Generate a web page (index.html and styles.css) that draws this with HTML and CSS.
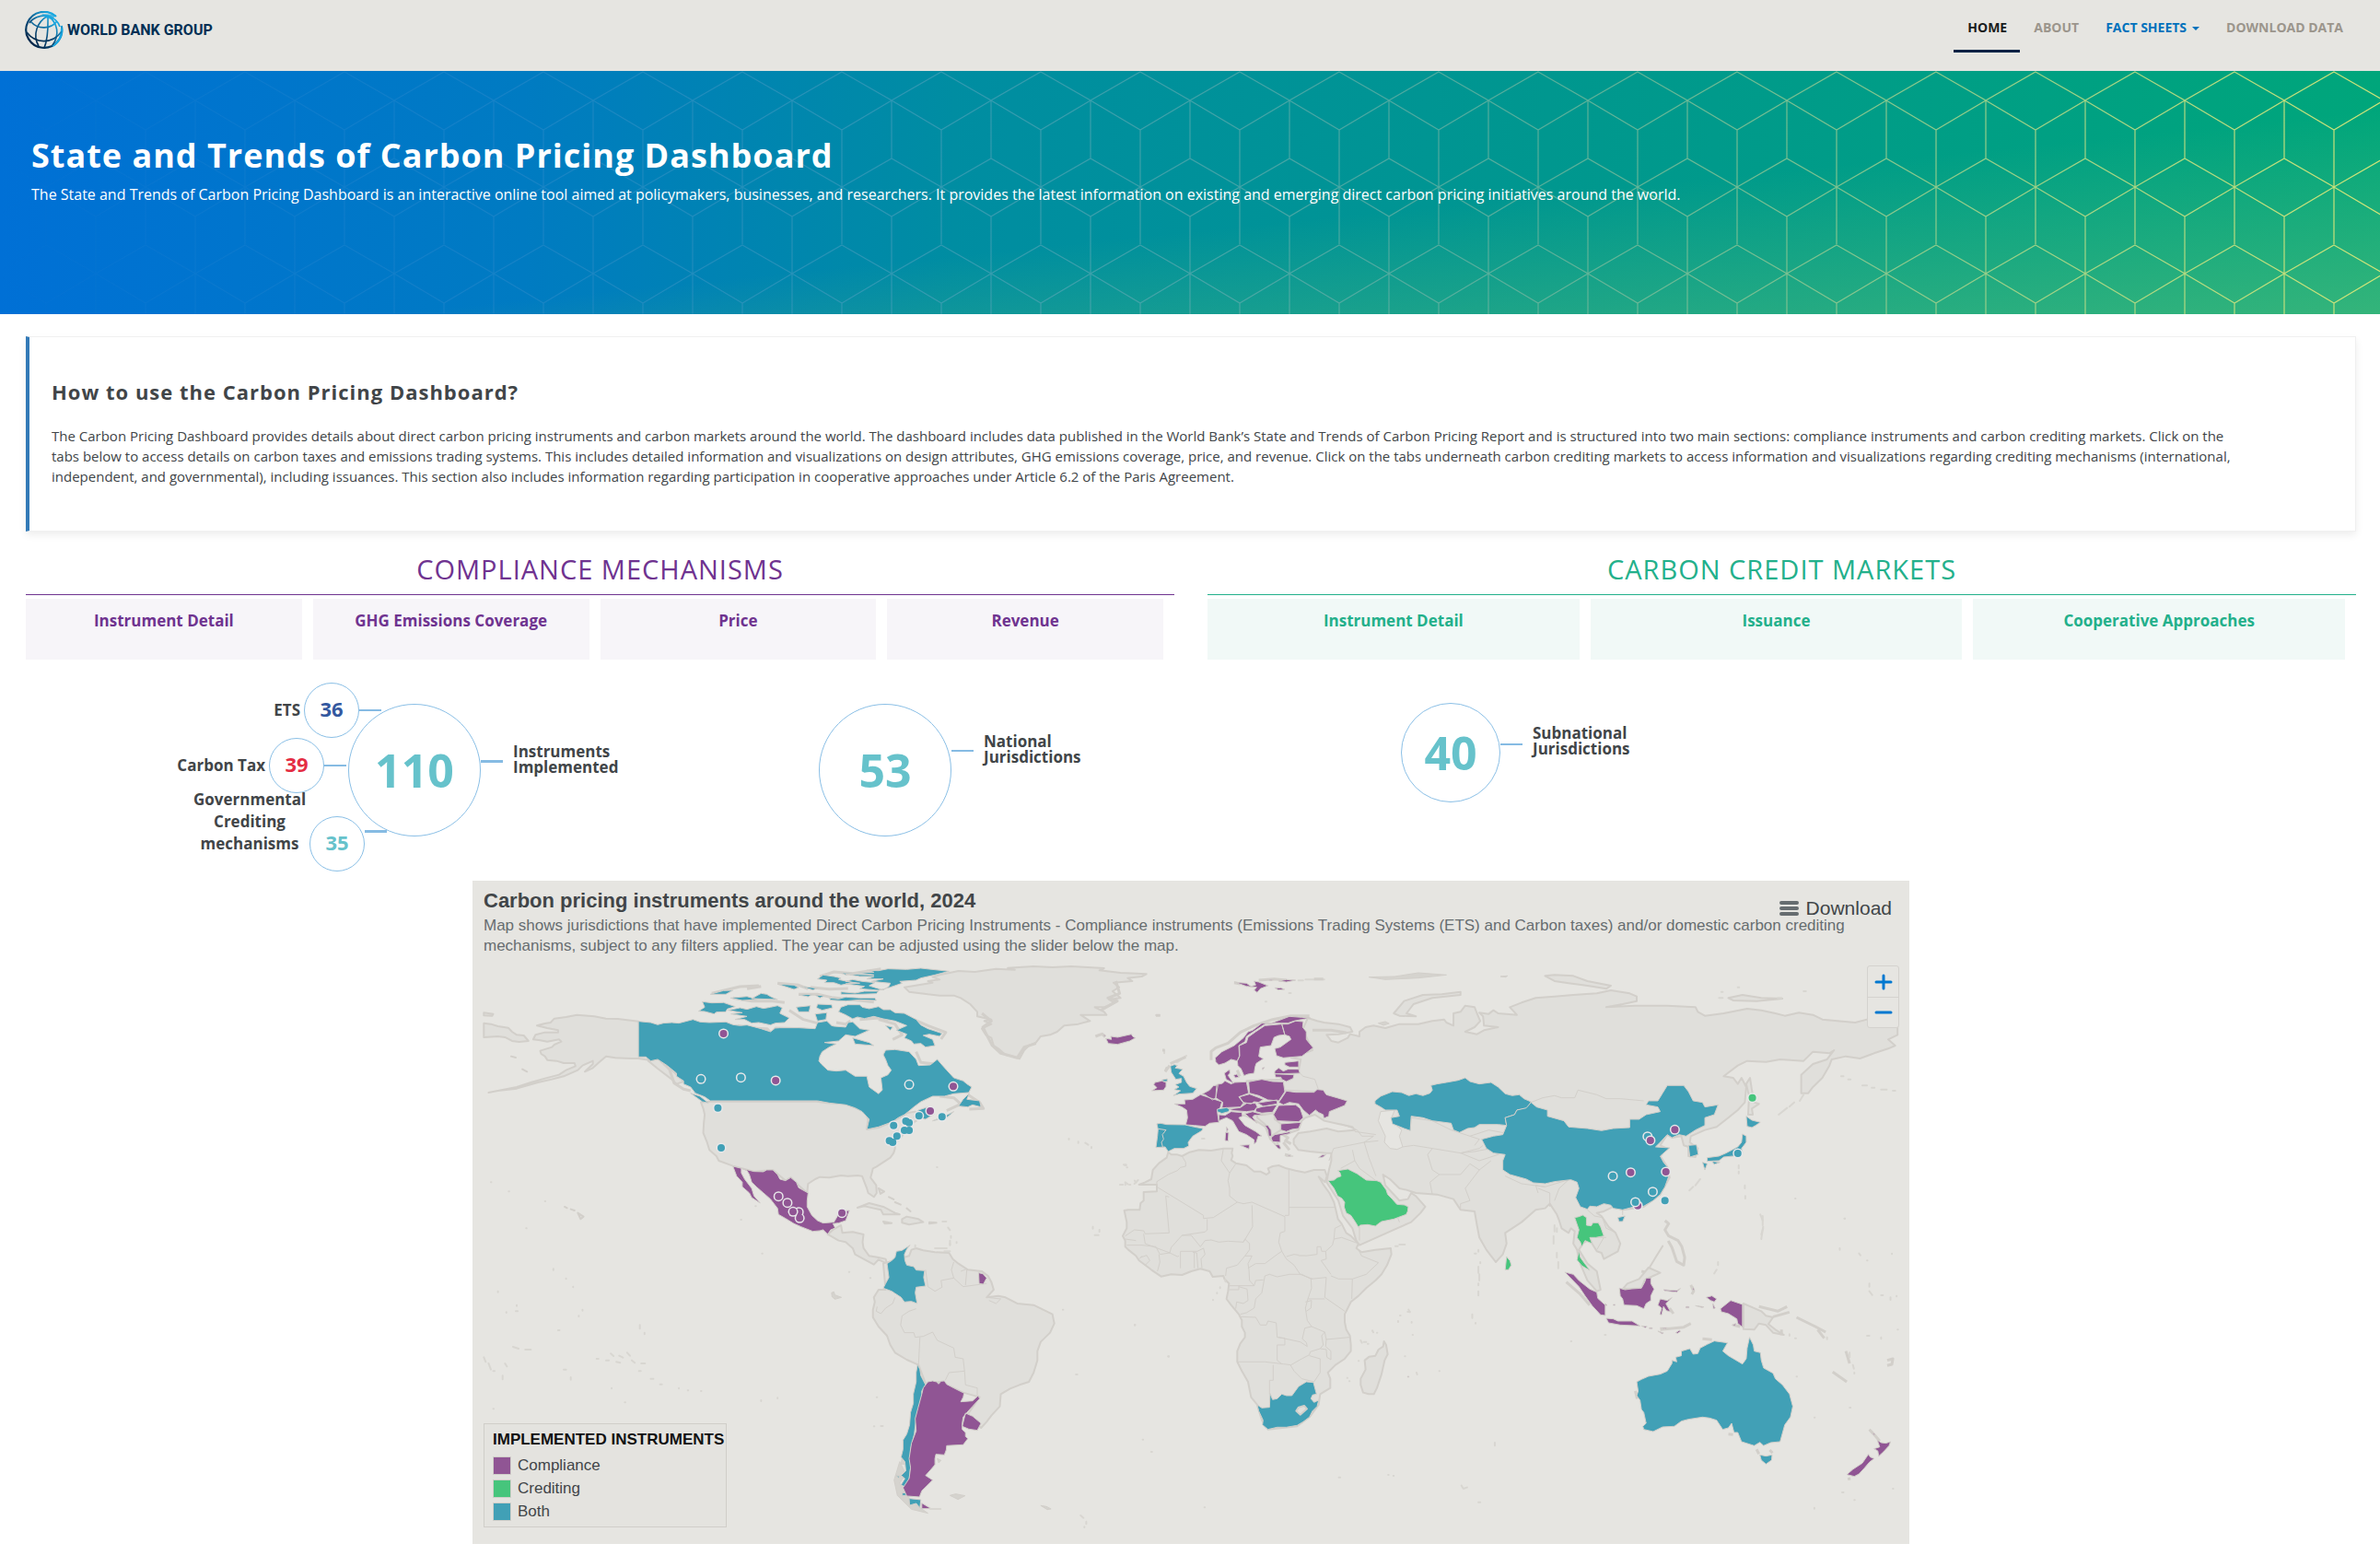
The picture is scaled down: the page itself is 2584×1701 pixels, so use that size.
FILE: index.html
```html
<!DOCTYPE html>
<html lang="en">
<head>
<meta charset="utf-8">
<title>State and Trends of Carbon Pricing Dashboard</title>
<link rel="stylesheet" href="styles.css">
</head>
<body>
<header class="site-header">
  <a class="brand" href="#">
    <svg class="brand-globe" viewBox="0 0 42 42" aria-hidden="true">
      <defs><linearGradient id="globe" x1=".1" y1=".9" x2=".75" y2=".1"><stop offset="0" stop-color="#002244"/><stop offset=".45" stop-color="#0a4a78"/><stop offset="1" stop-color="#1aa7e0"/></linearGradient></defs>
      <g fill="none" stroke="url(#globe)" stroke-width="1.6">
        <path d="M34 6A19.500 19.500 0 1 0 39.800 16" stroke-width="2.2"/>
        <path d="M40 19A19.500 19.500 0 0 1 30 38" stroke="#1aa7e0" stroke-width="2.2"/>
        <path d="M25 5C13 12 8 26 15 38M25 5C25 14 26 28 21 40M25 5C36 13 38 26 30 37M25 5C16 4 8 8 5 13M25 5C31 7 36 11 38 17"/>
        <path d="M7 12C14 20 28 20 35 11M2 23C12 36 30 36 40 22"/>
      </g>
      <path d="M18 3L34 4 30 9 24 8Z" fill="#1aa7e0" opacity=".7"/>
    </svg>
    <span>WORLD BANK GROUP</span>
  </a>
  <nav class="main-nav" aria-label="Main">
    <a class="is-active" href="#">HOME</a>
    <a href="#">ABOUT</a>
    <a class="is-menu" href="#">FACT SHEETS<i class="caret"></i></a>
    <a href="#">DOWNLOAD DATA</a>
  </nav>
</header>

<section class="banner">
  <svg class="banner-pattern" width="100%" height="264" aria-hidden="true">
    <defs>
      <pattern id="cubes" x="-4" y="0" width="108" height="264" patternUnits="userSpaceOnUse">
        <path d="M54 1L108 32 54 64 0 32ZM54 64V188M0 32V95M108 32V95M-54 126L0 95 54 126 0 158ZM54 126L108 95 162 126 108 158ZM54 189L108 220 54 252 0 220ZM54 252V264M0 158V264M108 158V264" fill="none" stroke="#fff" stroke-width="1.2"/>
      </pattern>
      <mask id="cube-mask"><rect width="100%" height="264" fill="url(#cubes)"/></mask>
      <linearGradient id="cube-ink">
        <stop offset="0" stop-color="#3a8fd8" stop-opacity="0"/>
        <stop offset=".2" stop-color="#3a8fd0" stop-opacity=".35"/>
        <stop offset=".4" stop-color="#5aa5bd" stop-opacity=".55"/>
        <stop offset=".65" stop-color="#74b79f" stop-opacity=".75"/>
        <stop offset=".85" stop-color="#a3d387" stop-opacity=".95"/>
        <stop offset="1" stop-color="#cfe478"/>
      </linearGradient>
    </defs>
    <rect width="100%" height="264" fill="url(#cube-ink)" mask="url(#cube-mask)"/>
  </svg>
  <div class="banner-text">
    <h1>State and Trends of Carbon Pricing Dashboard</h1>
    <p>The State and Trends of Carbon Pricing Dashboard is an interactive online tool aimed at policymakers, businesses, and researchers. It provides the latest information on existing and emerging direct carbon pricing initiatives around the world.</p>
  </div>
</section>

<main>
<section class="intro">
  <h2>How to use the Carbon Pricing Dashboard?</h2>
  <p>The Carbon Pricing Dashboard provides details about direct carbon pricing instruments and carbon markets around the world. The dashboard includes data published in the World Bank’s State and Trends of Carbon Pricing Report and is structured into two main sections: compliance instruments and carbon crediting markets. Click on the<br>tabs below to access details on carbon taxes and emissions trading systems. This includes detailed information and visualizations on design attributes, GHG emissions coverage, price, and revenue. Click on the tabs underneath carbon crediting markets to access information and visualizations regarding crediting mechanisms (international,<br>independent, and governmental), including issuances. This section also includes information regarding participation in cooperative approaches under Article 6.2 of the Paris Agreement.</p>
</section>

<div class="sections">
  <section class="tabs tabs-compliance">
    <h2>COMPLIANCE MECHANISMS</h2>
    <nav aria-label="Compliance mechanisms">
      <a href="#">Instrument Detail</a><a href="#">GHG Emissions Coverage</a><a href="#">Price</a><a href="#">Revenue</a>
    </nav>
  </section>
  <section class="tabs tabs-credit">
    <h2>CARBON CREDIT MARKETS</h2>
    <nav aria-label="Carbon credit markets">
      <a href="#">Instrument Detail</a><a href="#">Issuance</a><a href="#">Cooperative Approaches</a>
    </nav>
  </section>
</div>

<section class="stats">
  <div class="stat stat-total">
    <ul class="breakdown">
      <li class="part-ets"><span>ETS</span><b class="circle">36</b><i class="link"></i></li>
      <li class="part-tax"><span>Carbon Tax</span><b class="circle">39</b><i class="link"></i></li>
      <li class="part-gov"><span>Governmental Crediting mechanisms</span><b class="circle">35</b><i class="link"></i></li>
    </ul>
    <b class="circle circle-large">110</b><i class="link"></i>
    <span class="stat-label">Instruments<br>Implemented</span>
  </div>
  <div class="stat stat-national">
    <b class="circle circle-large">53</b><i class="link"></i>
    <span class="stat-label">National<br>Jurisdictions</span>
  </div>
  <div class="stat stat-subnational">
    <b class="circle circle-medium">40</b><i class="link"></i>
    <span class="stat-label">Subnational<br>Jurisdictions</span>
  </div>
</section>

<section class="map-panel">
  <header>
    <h2>Carbon pricing instruments around the world, 2024</h2>
    <p>Map shows jurisdictions that have implemented Direct Carbon Pricing Instruments - Compliance instruments (Emissions Trading Systems (ETS) and Carbon taxes) and/or domestic carbon crediting mechanisms, subject to any filters applied. The year can be adjusted using the slider below the map.</p>
  </header>
  <button class="download" type="button">
    <svg width="21" height="16" viewBox="0 0 21 16" aria-hidden="true"><path d="M2 2H19M2 8H19M2 14H19" stroke="#666d70" stroke-width="4" stroke-linecap="round"/></svg>Download
  </button>

  <svg class="world" viewBox="513 1042 1560 634" role="img" aria-label="World map of carbon pricing instruments">
    <!-- North America and Greenland -->
    <g transform="translate(510 950) scale(.5102 .3333)">
      <path class="land" d="M359 476L335 472 315 468 290 467 265 460 228 455 205 462 180 467 172 480 160 483 143 490 165 498 188 505 188 512 160 512 140 520 135 535 150 538 165 542 190 535 195 542 180 552 175 560 150 572 152 582 160 590 165 602 185 605 200 612 223 612 225 622 205 635 190 650 160 662 130 675 100 690 60 702 40 708 60 702 100 695 145 675 175 665 200 655 230 635 240 620 262 605 262 615 245 640 262 628 275 610 290 590 310 595 330 596 345 597 359 597 385 603 405 598 420 620 440 650 455 672 440 680 430 665 400 630 380 605Z"/>
      <path class="land" d="M30 482L45 485 60 492 82 497 90 510 100 520 115 522 125 540 105 543 90 540 75 528 60 525 30 528ZM30 448L50 452 48 458 30 457ZM88 590l10 4zM112 632l10 8z"/>
      <path class="land" d="M512 737L738 737 760 742 800 745 840 770 848 795 845 828 870 822 900 803 930 775 948 770 960 790 935 815 938 828 925 840 905 875 905 890 902 905 895 920 880 935 865 950 858 955 856 968 853 985 865 1010 866 1035 860 1048 848 1035 845 1020 840 1000 835 980 825 978 805 980 790 978 765 985 745 983 735 990 720 1005 718 1035 700 1010 683 985 672 995 645 960 605 965 560 947 530 930 525 915 510 895 505 870 497 840 498 810 500 780 497 760 492 740Z"/>
      <path class="land" d="M925 365L955 358 985 350 975 345 1000 340 985 332 1000 325 1040 312 1075 315 1120 305 1160 308 1145 302 1200 297 1240 300 1280 297 1350 303 1340 310 1385 318 1440 322 1430 330 1400 335 1410 345 1370 350 1382 365 1368 378 1385 400 1360 405 1372 415 1350 430 1330 430 1350 445 1355 455 1300 455 1320 475 1295 485 1265 490 1250 510 1235 520 1215 525 1205 545 1190 555 1180 570 1170 598 1155 590 1140 585 1125 565 1115 555 1110 530 1098 520 1090 500 1110 485 1095 475 1110 470 1080 460 1080 445 1065 420 1045 400 1030 392 1000 392 975 388 935 380Z"/>
      <path class="fringe" d="M1090 450l20 25-18 20 8 25 12 35 18 25 35 15 15-35 25-12M1375 345l8 40-25 15 20 10-35 30M405 602l20 30 10 45 20 20 15 5M1060 715l25 25 8 20-30 2M1000 720l30 5 15 20-30 22M945 470l30 20 38 22-10 22M870 470l35 15 15 35-20 15M570 490l25 8 38 2 8 14 10-16 60 2 25 12M780 480l20 5 10-10M950 575l10 35 30 5M515 385l60-22 40-3M560 400l40 10 45 0 25 5M655 352l45 6 20 12M700 388l40 0 30 10 90 15M745 330l30-15 40 5 60-15M830 470l40-5 20 10M680 440l30 30 30 12M590 370l30-8M725 365l40 6 40-2"/>
      <path class="both" d="M359 476L385 480 400 487 412 482 430 480 445 482 475 470 490 478 510 480 545 478 560 487 575 490 590 488 620 500 640 510 650 498 660 497 700 497 735 500 740 480 760 475 770 490 775 492 800 495 805 480 815 478 830 500 850 505 835 515 820 525 800 520 785 540 755 545 780 550 765 560 750 575 745 590 743 605 748 615 762 635 780 638 800 635 820 655 845 655 850 690 870 712 878 700 875 660 890 650 897 635 890 620 885 600 880 585 885 570 905 568 935 575 950 600 955 620 980 618 995 600 1005 618 1015 635 1030 660 1050 670 1058 680 1068 690 1062 708 1030 712 1010 720 985 720 960 738 945 755 935 768 925 780 912 790 900 803 870 820 845 828 850 795 835 770 820 758 800 748 765 742 740 735 512 735 500 722 480 710 470 690 455 680 455 670 440 655 440 645 420 620 400 600 385 605 375 592 359 592Z"/>
      <path class="both" d="M955 765L975 755 988 778 970 795 945 788ZM985 800L1010 785 1030 770 1015 790ZM1063 710L1058 730 1085 735 1088 755 1070 748 1060 755 1040 752 1050 730ZM470 710L490 720 508 742 495 738Z"/>
      <path class="both" d="M495 412L515 416 540 415 565 428 548 436 545 445 525 446 520 452 500 444 487 443 500 430ZM550 440L575 432 590 437 610 428 625 434 640 430 655 425 665 432 660 450 680 465 670 480 650 482 640 488 615 480 600 482 585 470 565 470 590 460 556 452 580 448ZM1020 313L990 308 960 303 930 307 890 305 870 311 845 310 860 316 825 318 860 325 800 322 830 330 860 330 845 338 880 338 855 346 895 352 892 362 880 374 862 366 850 360 862 350 835 346 815 340 800 346 830 352 800 354 840 362 830 370 870 375 895 365 920 352 915 346 950 342 960 335 990 325ZM752 325L775 330 790 335 785 340 815 350 790 358 775 350 755 350 760 342 740 338ZM765 400L785 403 800 397 830 400 862 400 865 408 830 406 800 410 768 407ZM790 380L820 384 840 378 870 378 865 386 830 388 790 388ZM790 430L805 422 830 422 835 430 850 435 870 428 880 438 895 438 905 448 925 450 950 470 960 488 975 500 1005 515 1000 525 978 518 965 522 985 535 990 555 970 560 960 548 945 550 940 540 925 530 930 518 908 505 930 490 905 475 880 468 860 460 840 467 825 462 815 468 800 455 785 445ZM740 420L770 422 772 432 750 440 738 432ZM735 452L760 448 758 470 740 475ZM695 430L725 425 722 445 700 445ZM512 388L540 376 560 375 545 388ZM555 400L590 395 612 405 580 408ZM620 385L632 388 642 397 655 405 600 402ZM700 390L730 388 720 396ZM815 530L850 545 860 555 820 550ZM885 490L900 495 895 505ZM655 355L690 358 700 366 690 372ZM705 362L740 368 730 374ZM735 390L755 393 745 400ZM790 318L825 320 800 325Z"/>
      <path class="compliance" d="M560 948L605 965 625 966 632 960 645 960 655 975 660 990 672 995 683 985 695 1000 700 1018 720 1035 718 1060 718 1080 728 1108 740 1125 752 1133 775 1130 782 1112 785 1095 808 1092 800 1125 785 1133 773 1135 778 1150 768 1155 762 1170 752 1155 745 1158 730 1160 705 1145 690 1135 672 1118 657 1105 655 1085 640 1055 625 1035 610 1015 600 1000 595 975 590 962 578 955 578 970 585 990 600 1020 605 1045 618 1068 600 1050 595 1035 580 1015 580 1000 568 980Z"/>
      <path class="land" d="M762 1170L773 1155 790 1140 793 1165 815 1162 838 1170 836 1195 838 1215 850 1240 870 1245 885 1250 888 1265 870 1252 860 1268 838 1250 820 1235 815 1215 800 1195 785 1190ZM825 1083L850 1068 880 1080 905 1100 915 1105 880 1105 875 1090 860 1085 840 1078ZM920 1120L930 1112 955 1120 965 1130 935 1138 920 1132ZM880 1128L898 1133 883 1135ZM978 1130L993 1132 978 1135ZM870 1020l12 10-8 8zM892 1048l10 8zM905 1065l12 8zM930 1085l8 10zM202 1080l5 4zM215 1088l8 4zM230 1100l12 12-6 8z"/>
      <path class="specks" d="M1006 1128l8 0M1018 1148l4 8M1024 1175v6M1022 1200v4M1000 1215h15M1275 858v3M1295 868v4M1310 872l6 6M1323 885v4M1385 1008h5M1395 1005v4M1415 995l3 6M1326 1145v6M1340 1155v6M1330 1172h8M1394 945h3M994 951h1M45 1000h1M83 1030h1M160 1062h1M120 1150h1M608 1078h1M577 1122h1M1478 570v10M1525 588l-20 22M1460 456h8"/>
    </g>

    <!-- South America -->
    <g transform="translate(510 1300) scale(.5102 .3333)">
      <path class="land" d="M935 190L940 170 950 165 965 172 990 178 1020 180 1028 200 1040 215 1060 235 1090 240 1103 255 1110 275 1115 300 1100 325 1125 320 1140 325 1165 345 1200 350 1220 365 1240 380 1244 410 1235 440 1215 470 1208 500 1208 530 1200 570 1190 600 1170 610 1150 622 1130 640 1128 680 1110 710 1100 730 1088 750 1058 710 1085 650 1050 635 1000 600 970 605 955 545 930 528 905 505 895 480 888 450 870 420 858 390 858 365 862 340 860 325 870 300 885 300 880 215Z"/>
      <path class="border" d="M970 235L975 290 990 305 1005 292 1003 270 1030 262 1025 235 1030 210M1045 240L1058 232 1055 285M1030 262L1050 290 1100 280M950 362L935 370 920 385 917 415 925 440 945 440 948 455 965 452 985 438 995 465 1030 490 1033 520 1050 525 1053 565 1020 570 1012 595M958 455L955 545M1053 565L1055 610 1080 620 1080 650M905 325L900 345 885 360 875 378 865 370 867 355M1100 325L1130 330 1120 345 1105 335"/>
      <path class="fringe-fill" d="M915 860L928 900 915 930 940 990 975 1028 940 1015 910 970 903 920ZM1022 970l12-5 20 6-15 12zM1215 1003l12 3 10 8-8 2zM920 848l12 0-2 20-12 0zM770 310l5-3 2 10 14 8-14 6-6-8zM995 850l8 6-5 8z"/>
      <path class="both" d="M937 155L930 168 925 185 926 205 930 220 945 225 950 236 968 238 966 260 970 288 950 292 948 310 952 345 940 338 925 340 918 325 905 312 898 305 880 295 885 280 892 260 888 215 898 205 905 195 908 175 920 172Z"/>
      <path class="both" d="M953 543L958 560 960 580 970 610 962 630 962 655 956 680 950 720 946 770 938 820 938 880 935 920 928 945 918 935 926 915 918 905 928 890 926 860 918 845 922 820 922 790 930 770 936 740 938 700 944 670 944 640 950 600 950 570ZM920 962h9v8h-9zM935 980l25 4-2 26-8-14-14 6zM908 905l8 3-3 5z"/>
      <path class="compliance" d="M975 600L985 597 993 600 998 607 1003 598 1010 597 1015 608 1030 620 1052 637 1050 650 1045 665 1070 662 1082 645 1085 655 1070 680 1058 700 1050 715 1048 735 1048 755 1055 765 1055 778 1060 785 1050 805 1015 808 1014 822 1010 838 992 836 990 850 990 870 980 888 970 905 985 920 972 940 962 955 957 975 930 972 922 945 935 915 938 880 935 850 940 800 950 760 948 720 954 685 962 640 965 620ZM1055 702L1070 712 1088 735 1080 758 1062 754 1048 745ZM1083 245L1092 248 1100 262 1093 282 1084 280ZM962 995L982 1013 962 1013Z"/>
      <path class="specks" d="M980 1014h22M92 486l12 6M118 495h12M30 520l4 15M40 540l5 20M50 565h3M75 540l4 10M70 580v12M200 560h5M215 585v8M270 525h4M290 530h6M300 508l6 8M318 515l8 6M312 535l8 3M335 505l6 10M345 530l6 8M365 540h8M360 565h4M385 590h6M405 608h4M445 620v2M464 628h1M492 630h1M302 620v2M330 667h1M362 415v12M372 440v5M240 365v3M232 385v2M178 232v4M205 263v2M220 290v2M100 350v3M78 373v2M60 305v3M98 370h4M188 432h3M50 688h1M620 660v3M655 652v2M866 650h1M875 744h4M860 745h1M852 262h1M807 242h1M622 182h1M1300 1035l6 8M1312 1055v8M1308 1072v2M1290 576h3M1486 517h2M1415 414h1M1432 788h1M1450 828h2M1262 365h1M990 165h15M1010 175h12M948 155v8M1022 140v15M1036 145v3"/>
    </g>

    <!-- Africa -->
    <g transform="translate(1200 1230) scale(.3333)">
      <path class="land" d="M205 62L215 70 235 70 250 75 275 62 305 55 345 57 385 50 415 50 412 65 415 75 410 88 425 98 460 105 485 125 505 125 525 135 535 128 530 115 545 108 565 105 590 115 620 122 650 128 680 120 715 120 722 140 716 160 695 142 712 170 730 195 745 225 750 245 758 280 770 295 785 325 800 335 825 360 818 375 835 388 880 380 930 375 932 395 918 430 900 460 880 480 850 505 825 530 800 550 790 570 780 590 780 615 785 640 797 660 800 690 800 710 780 735 750 755 725 780 733 800 733 830 700 850 695 885 665 925 625 955 530 965 510 935 495 885 475 860 465 810 445 775 430 745 430 710 440 685 455 665 455 650 445 630 445 610 435 590 410 560 395 540 400 515 403 490 388 475 385 465 350 468 340 450 310 442 280 450 250 462 215 460 182 467 150 445 130 430 110 415 100 400 75 380 65 370 65 350 57 335 70 310 70 290 62 252 75 250 112 250 115 228 125 220 125 192 168 190 168 168 110 168 130 160 150 150 155 120 175 98 200 80Z"/>
      <path class="border" d="M250 75L262 95 262 108 245 112 235 122 205 135 168 158V175L320 268 320 278 352 275 430 225 405 205 405 180 400 155 405 130 378 90 385 50M405 130L425 100M197 205L208 325 130 328 125 318 95 315 65 335M197 205L208 208M430 225L450 230 478 225 585 272V320L570 325 565 355 575 385 590 410 615 430 635 460 675 475M585 268H598V118M598 242H750M332 280V315L325 322 250 333 215 372 210 390 130 360 125 328M250 333H280L310 370 325 350 345 348 370 355 400 352 450 355 480 305 478 235M450 355L455 345 470 360 470 380 455 400 478 400 465 425 468 445M465 440L490 425 520 425 560 395 575 385M590 402L615 395 650 400 690 395 690 370 702 370 705 385 718 385 720 410 703 415 735 460M718 385L740 365 745 345 770 340 820 358M745 345L748 310 768 300M735 465L760 475 805 475 850 460 890 422 835 400 825 380M805 475L803 540M720 470L715 535 780 580M670 475L672 505 660 540 652 570 658 610 672 630 650 635 642 670 655 682 658 695 635 680 565 665M520 465L510 520 490 540 485 570 460 585 440 590M520 465L535 460 560 468 600 460 640 460 670 475 720 470M440 598L490 600 505 625 525 625 530 612 557 618 560 665 585 668V690H560V740L575 752M430 745L520 745 580 752 605 755 640 735 665 722 668 712 700 702 720 705M672 630L715 648 720 672 795 665M715 648L705 660 710 690 700 702M720 672L718 695 735 710 735 738 722 730 720 705M547 755V805H535V850M603 755L615 775 640 800 680 810 700 780 700 735 665 725M660 540H715M652 550L672 545 670 570 655 580M400 497H435V510H403M435 500L462 508 465 545 450 555 428 550 425 572M435 497H485L490 480 515 478M468 445L470 480 485 497M392 465L395 440 430 430 455 400M320 375L325 395 312 410 315 440M302 440L298 390 285 388M290 390V440M245 385L245 440M175 395L178 420 170 450M245 385H300L320 375M65 345L100 350M70 365L120 365 165 370 178 395 210 390 235 402 240 400M120 400L110 410M115 405L135 398 145 415 130 430"/>
      <path class="land" d="M908 678L915 690 920 720 910 740 900 785 885 830 875 850 858 850 840 845 832 820 832 800 848 770 845 740 860 728 880 725 890 705 905 695Z"/>
      <path class="both" d="M495 885L510 895 535 893 537 848 545 868 560 865 575 850 590 855 608 855 630 825 655 810 678 812 688 850 675 853 670 865 680 877 695 870 690 890 675 905 665 925 645 940 625 952 590 958 560 958 530 965 512 950 514 935 500 905Z"/>
      <path class="land" d="M622 905L630 893 648 888 657 898 635 917Z"/>
      <path class="specks" d="M632 399h18M390 478l2 6M374 502v3M364 520v2M351 543v1M96 626h1M206 728h1M832 675l4 8M842 680h8M855 686h2M870 643l3 6M885 650h1M988 575l4 8M985 582h8M954 612v3M998 615v2M960 594h2M1001 657h1M976 727h1M1014 780l2 6M1088 775h1M945 368h8M958 363h18M825 742h1M788 797h1M795 808h1M48 168h6M65 160l8 6M78 168h4M95 165l12-12M60 103h8M70 112h2M590 75h20M315 18h8"/>
      <path class="compliance" d="M985 792h4v3h-4z"/>
    </g>

    <!-- Asia -->
    <g transform="translate(1300 950) scale(.5102 .3333)">
      <path class="land" d="M235 465L255 475 270 480 300 485 325 495 330 510 300 518 275 520 285 540 300 545 320 530 325 518 345 525 345 510 358 495 375 490 400 498 430 485 470 485 500 475 525 470 530 480 545 490 545 450 560 445 570 425 590 430 595 450 602 475 590 495 570 510 595 518 610 505 640 495 610 490 608 460 600 448 620 452 630 440 640 450 680 455 665 430 690 415 720 400 760 395 800 390 850 385 880 375 920 385 935 395 935 410 905 420 870 430 930 425 1000 425 1060 430 1065 445 1080 458 1120 450 1170 435 1200 440 1230 450 1250 458 1280 448 1310 455 1330 470 1400 480 1425 470 1490 490 1490 520 1470 535 1485 555 1470 565 1440 580 1410 597 1380 590 1350 600 1345 620 1330 660 1310 690 1300 710 1285 710 1285 650 1310 615 1340 600 1355 570 1345 580 1310 575 1290 605 1240 600 1210 608 1170 605 1150 620 1120 655 1140 660 1150 680 1158 660 1168 690 1165 740 1150 765 1130 790 1105 820 1080 830 1050 850 1048 870 1065 890 1060 918 1045 915 1045 885 1035 880 1030 850 1010 855 1000 845 985 880 1000 890 985 915 1000 950 1005 985 985 1040 950 1080 905 1090 885 1080 865 1095 850 1100 860 1110 875 1145 890 1165 900 1200 895 1225 865 1250 860 1230 850 1225 840 1200 835 1185 820 1200 812 1220 830 1265 850 1290 858 1350 850 1355 830 1320 812 1255 808 1220 800 1200 803 1160 795 1150 790 1165 775 1150 770 1125 765 1105 750 1070 740 1085 720 1090 690 1130 670 1150 655 1165 658 1200 650 1235 635 1260 625 1240 615 1220 600 1180 595 1140 590 1095 560 1090 545 1055 510 1040 465 1035 445 1025 430 1020 410 990 395 975 400 1010 415 1035 430 1060 448 1055 455 1035 465 1045 485 1080 475 1100 455 1130 425 1150 345 1205 338 1190 330 1150 310 1110 300 1060 275 1000 280 960 285 930 285 905 275 905 240 900 215 895 205 875 205 860 215 840 240 835 275 825 300 835 335 830 330 820 300 810 270 800 250 780 230 790 222 800 215 830 195 840 165 850 175 890 155 860 145 820 125 800 105 785 90 780 100 740 105 670 180 665 175 655 215 640 220 600 200 595 245 570 230 520 225 500Z"/>
      <path class="sea" d="M390 770L420 765 412 795 420 810 435 830 430 850 437 885 425 893 410 890 398 870 400 850 385 800Z"/>
      <path class="border" d="M710 740L735 725 760 718 775 725 803 725 810 700 850 715 870 728 900 728 950 735M305 810L340 830 350 850 375 850 355 870 365 920 380 980M500 890L490 910 500 960 515 975 495 1000 500 1040M385 865L355 870M437 885L460 880 500 890 560 905 600 890 608 880M453 832L455 790 500 800 540 830 600 860 590 880M560 905L600 930 650 905M560 905L590 900 625 890M515 975L560 975 580 940 600 960 625 930M600 960L570 1020 580 1060 560 1070 560 1090M655 980L690 1005 740 1015 720 1010 725 1035M740 1015L790 992M725 1020L750 1035 750 1080M790 992L770 1020 760 1060M830 1090L845 1110 862 1115 870 1150 885 1160M865 1180L850 1220M835 1180L870 1180M355 870L290 890 280 930M330 895L335 930 305 955M335 930L345 955 380 995M430 1130L425 1110 440 1100M215 640L225 655 250 665 258 700M180 680L185 700 255 705M335 835L380 845 M580 850L620 830 655 840M345 1145L345 1190M1010 855L1050 825M130 780L150 785 165 800 175 810"/>
      <path class="land" d="M418 450L440 410 480 390 520 388 560 380 560 390 500 400 460 420 445 450 465 460 430 458ZM740 328L760 325 800 328 830 345 880 360 870 370 840 362 820 358 790 352 760 345ZM1130 400L1160 390 1200 400 1245 402 1190 410 1140 408ZM1168 680L1176 660 1180 700 1185 740 1195 745 1180 760 1182 780 1172 780 1174 720Z"/>
      <path class="fringe-fill" d="M365 332L420 330 470 318 530 325 470 335 400 340ZM645 330l15-2-4 4zM385 482l15-5 8 6-12 6z"/>
      <path class="both" d="M378 735L390 720 415 705 435 708 450 718 465 712 480 718 495 710 500 700 497 685 510 680 530 675 555 668 570 660 580 672 600 680 625 675 640 690 655 712 670 718 685 715 695 728 710 738 702 760 680 765 675 780 655 790 658 815 640 812 600 812 590 822 575 825 558 838 545 830 540 808 525 805 500 800 480 790 455 785 453 832 440 825 415 810 412 790 430 785 425 765 400 765 390 755 378 745Z"/>
      <path class="both" d="M710 740L722 755 745 765 745 785 780 800 790 820 830 825 860 832 885 825 920 822 920 795 940 795 955 780 985 770 980 755 955 748 960 735 980 735 990 710 1000 685 1035 685 1045 705 1055 735 1075 740 1080 755 1108 748 1100 780 1080 790 1080 815 1060 830 1040 850 1025 845 1010 855 1000 845 985 870 975 885 1005 888 985 915 992 935 1000 950 1002 985 995 1015 985 1040 970 1060 950 1078 930 1080 905 1090 885 1085 880 1075 865 1070 850 1080 835 1078 830 1088 815 1080 805 1050 812 1020 808 1000 795 992 760 998 740 1005 715 1002 700 990 665 975 650 960 650 930 655 910 630 905 615 890 605 860 630 850 650 845 658 815 655 790 675 780 680 765 700 758Z"/>
      <path class="both" d="M1168 785L1180 798 1198 805 1188 815 1180 822 1170 818ZM1160 843L1168 850 1168 870 1158 890 1160 905 1140 915 1120 918 1110 930 1085 932 1085 920 1110 915 1125 905 1150 885 1158 870ZM1075 935L1085 940 1080 960ZM1095 932L1112 935 1100 942ZM1045 880L1062 878 1066 910 1048 918ZM895 1115L910 1110 905 1128 897 1128ZM905 1092v15"/>
      <path class="specks" d="M1290 715l-8 20M1270 740l-10 14M1255 758l-18 22M1370 655h5M1385 665h5M1415 685h10M1435 692h6M1455 698h12M1480 702h5M1115 380h3M1150 365h3M1290 378h5M1110 400h8M1235 400h8M1152 945v10M1152 965v6M1165 1010v10M1166 1045v8M1070 990l-10 20M1055 1015l-8 12M1203 1110v30M1204 1150l-4 20M1272 1053h1M1377 1118h1M765 1150v12M215 343h10M230 340h40M145 412h2M195 384h4"/>
    </g>

    <!-- Arabian Peninsula, over the Asian land mass -->
    <g transform="translate(1200 1230) scale(.3333)">
      <path class="crediting" d="M726 155L745 153 755 145 768 140 765 130 758 122 790 117 820 132 850 153 885 155 897 160 915 185 920 200 935 215 950 232 975 234 987 240 985 255 980 265 940 280 900 288 890 295 880 303 855 298 830 300 825 307 815 290 800 268 785 260 778 240 780 225 770 212 757 205 745 180Z"/>
    </g>

    <!-- Europe -->
    <g transform="translate(1180 1040) scale(.3333)">
      <path class="fringe" d="M405 332v-28l15-12 40-15 40-35 45-22 60-20 60-12 60 0M480 80l20 4M560 72l50-4 40 4M28 255l22-8 10 10M255 370l15-20M262 355l-6 12M272 344l50-22M640 575l15 10-8 10 18 10M640 600l20 25M645 640l20 4M740 68l30 0M246 300h8M225 187h14M490 365l8 20M735 235l60 0 50 8"/>
      <path class="land" d="M555 503L580 510 610 505 612 525 632 540 632 560 600 580 585 545 555 520Z"/>
      <path class="compliance" d="M418 325L440 305 450 300 480 285 498 270 510 260 525 240 540 235 570 212 600 212 620 205 660 190 700 193 728 195 700 200 675 205 655 212 615 212 580 215 550 235 520 255 515 272 495 285 497 320 490 335 470 330 450 342 430 348 420 338ZM497 285L520 275 525 258 550 240 580 220 635 215 645 250 625 252 610 258 600 285 565 290 560 320 575 328 552 343 548 355 545 375 525 378 512 383 502 360 492 350 490 335 498 318ZM635 215L655 215 680 205 705 207 703 225 715 240 715 265 737 292 720 305 700 320 640 325 618 318 612 295 630 290 665 265 660 255 645 250Z"/>
      <path class="compliance" d="M448 375L465 363 466 375 460 382 478 408 454 395ZM478 382l10-4 8 10-12 2zM645 340L690 335 690 355 660 355 645 348ZM612 368L625 358 640 368 655 362 690 362 694 375 640 377 612 377ZM612 377L675 380 672 392 650 402 635 395 632 388 615 388ZM527 403L570 395 605 402 640 403 645 435 625 465 590 462 560 448 530 440ZM423 412L442 408 450 400 470 410 480 405 520 403 527 440 495 452 510 472 500 485 440 488 443 470 420 455ZM400 430L412 416 427 413 420 455 410 462 385 445 375 443ZM285 475L320 475 318 462 345 460 370 445 440 468 435 485 425 500 430 535 400 538 385 548 350 545 322 543 328 520 325 495 310 485ZM497 452L530 443 575 460 560 470 545 468 535 475 510 470ZM460 492L500 487 520 473 550 473 555 485 545 497 520 500 480 497ZM555 472L580 468 620 462 620 475 575 483ZM550 490L575 483 620 478 605 502 570 505 550 500ZM608 510L625 480 680 478 695 490 705 520 690 533 620 530ZM632 540L698 535 690 555 668 558 650 565 632 560ZM625 470L650 433 680 437 740 437 750 428 770 430 780 445 815 455 848 465 840 480 790 500 788 515 772 522 770 510 755 503 745 495 725 512 705 495 690 475 660 470 640 478Z"/>
      <path class="compliance" d="M430 510L450 512 470 500 505 503 507 515 495 520 515 545 550 565 570 580 558 580 552 600 545 605 545 592 520 575 495 565 475 530 455 520 430 530ZM500 610l30-2-2 14zM452 568l10 0-2 28-10-2zM455 550l5 8-4 8zM515 507L540 500 580 512 545 512 540 518 555 538 530 520ZM600 585L612 575 640 570 665 565 660 572 630 578 630 600 605 598ZM580 545L590 545 600 560 602 580 592 580 590 560ZM612 607l16 2 4 12-8 0zM755 650l10-8 14-2-10 8zM572 358l6-2-5 8zM655 642h8v3h-8z"/>
      <path class="compliance" d="M55 250h5v5h-5zM62 262L80 265 78 255 100 258 145 248 150 256 158 260 140 270 100 281 70 278ZM480 78L495 80 520 82 535 92 550 88 545 75 560 78 590 90 565 100 555 112 545 105 553 95 520 92 500 85ZM625 75L650 70 680 72 650 78ZM612 97l20 0 12 5-20 2zM590 70l18 0-8 4zM222 405L245 400 258 405 258 418 250 430 212 432 228 422 218 412Z"/>
      <path class="both" d="M228 540L240 538 260 542 320 543 350 550 378 555 375 562 345 580 330 600 332 612 315 620 285 620 265 630 255 615 225 617 230 580 232 558ZM425 492L455 487 465 492 462 500 440 506 425 500ZM272 352L285 347 295 350 288 358 312 362 300 376 315 385 325 405 335 418 358 425 345 440 300 443 282 448 305 432 285 428 300 420 288 412 308 405 308 392 290 395 275 372ZM245 397L262 393 262 402 250 402Z"/>
      <path class="border" d="M232 556L258 560 246 575 250 590 243 600 248 618"/>
    </g>

    <!-- South-east Asia and Oceania -->
    <g transform="translate(1300 1300) scale(.5102 .3333)">
      <path class="fringe" d="M995 75l8 10-8 20 8 20 20 15 8 20 6 35-2 25-15-12-10-45-8-22M1195 355l40 15 20-15M1225 388l35-15M945 240l15 5M1140 415l15 5M985 430l50-8 15-12M1380 500l8 40M1352 568l30 32M1275 390l40 30 22 18M1320 430l14 28M1468 530l12-5-2 18-10 4M1430 755l12 20 10 18M1005 360l8 18M1050 285l6 20-4 10M785 275l30 40 20 35M1075 460l20 3M1130 770l10 2M932 630l4 25M1190 820l5 15M1218 822l6 10M1243 430l0 18M1390 915l-6 2"/>
      <path class="land" d="M1162 345L1200 370 1210 385 1225 390 1215 412 1230 430 1248 447 1225 440 1210 415 1195 410 1185 430 1162 428ZM905 298L915 280 940 265 960 228 985 245 970 255 960 262 952 268 945 295ZM990 158L975 195 962 228 975 195Z"/>
      <path class="crediting" d="M803 65L812 62 820 57 828 65 828 90 838 92 842 82 853 82 858 95 865 125 848 130 835 130 840 150 825 140 818 160 815 145 808 130 812 105ZM812 172L815 195 822 210 828 222 835 237 818 222 808 203ZM658 193L665 205 668 220 662 235 655 235Z"/>
      <path class="compliance" d="M782 243L800 250 812 270 835 298 850 308 852 328 868 350 868 384 858 382 840 352 825 320 812 290ZM870 393L885 395 895 402 925 402 942 418 900 415 875 408ZM898 295L910 300 925 297 945 295 952 275 955 262 965 262 965 280 972 298 965 320 965 335 955 345 950 362 935 352 908 350 905 330 900 320ZM985 330L1000 335 1010 326 997 345 1007 372 998 368 992 355 988 382 984 380 988 360 980 350ZM992 300L1020 303 1028 296 1020 308 995 304ZM1113 362L1135 335 1160 348 1160 422 1150 410 1148 395 1130 378 1115 372ZM1083 325L1095 320 1105 330 1100 340 1092 335ZM1097 345l5 15-4 2zM945 418l12 2-4 4zM962 424h6v3h-6zM985 424l15 0-4 4zM980 435l12 6-3 2zM1018 440l8-8 2 4-6 6zM1040 355h6v4h-6zM1060 352l18 4-4 2zM1138 415l8-5-2 8zM1055 290l3 12-4-2zM868 345l4 6h-4zM885 348h4v3h-4z"/>
      <path class="both" d="M935 600L945 592 960 582 985 575 1000 565 1010 540 1010 530 1020 535 1018 520 1030 515 1030 500 1048 492 1055 510 1065 508 1070 490 1085 478 1100 467 1128 473 1118 500 1130 515 1160 542 1168 525 1170 490 1175 455 1183 480 1185 500 1198 505 1200 530 1205 555 1225 572 1230 590 1245 610 1260 640 1267 680 1262 715 1250 740 1240 795 1220 798 1205 808 1197 797 1185 808 1158 795 1150 765 1142 765 1137 735 1130 750 1118 755 1105 725 1090 718 1075 715 1045 722 1030 728 1015 745 990 747 970 762 950 755 948 745 955 735 950 700 945 690 942 660 935 645 938 630ZM1197 838L1210 842 1223 838 1222 855 1210 868 1200 855Z"/>
      <path class="compliance" d="M1447 790L1455 798 1465 800 1475 795 1472 808 1460 828 1450 842 1448 825 1440 818 1452 812ZM1428 836L1432 845 1440 850 1430 862 1420 880 1408 900 1398 908 1382 902 1395 885 1415 865ZM1436 765l6 5-2 3z"/>
      <path class="specks" d="M598 170v6M590 182h3M602 210v4M598 225v20M600 250v20M598 280v6M598 305v14M585 380v12M592 408v2M760 90v20M758 125v25M765 180v15M768 210v20M1198 55l5 20M1204 95l-4 40M1108 210v10M1105 235l-5 12M1367 165v5M1408 182l3 6M1425 205h1M1478 182v2M1430 280v10M1430 305l6 12M1455 318h4M1475 325v8M1488 320v2M1425 450h5M1455 455v5M1490 430h1M1260 445v5M1272 458h2M1340 455v6M1388 505v15M1395 545l2 12M1398 570v3M1388 684h2M1313 716h1M1275 583h1M1372 960h3M1398 985h1M1313 1010v3M1480 948h1M562 938l4 10 8-4M598 992h4M301 911h3M406 903h1M417 906h1M633 798v10M867 447h2M795 468h1M15 1009h1M1377 68h1"/>
    </g>

    <!-- Subnational markers -->
    <g class="markers" transform="translate(510 950) scale(.5102 .3333)">
      <path class="halo" d="M528 758h.1M535 888h.1M1005 787h.1M956 784h.1M935 806h.1M902 815h.1M928 801h.1M925 831h.1M935 831h.1M900 870h.1M909 850h.1M893 865h.1M492 664h.1M577 659h.1M935 682h.1"/>
      <path class="dot dot-both" d="M528 758h.1M535 888h.1M1005 787h.1M956 784h.1M935 806h.1M902 815h.1M928 801h.1M925 831h.1M935 831h.1M900 870h.1M909 850h.1M893 865h.1M492 664h.1M577 659h.1M935 682h.1"/>
      <path class="halo" d="M540 516h.1M651 669h.1M1029 688h.1M980 768h.1M657 1046h.1M676 1067h.1M700 1097h.1M702 1117h.1M792 1100h.1"/>
      <path class="dot dot-compliance" d="M540 516h.1M651 669h.1M1029 688h.1M980 768h.1M657 1046h.1M676 1067h.1M700 1097h.1M702 1117h.1M792 1100h.1"/>
      <path class="halo" d="M688 1096h.1"/><path class="dot dot-compliance" d="M688 1096h.1"/>
    </g>
    <g class="markers" transform="translate(1300 950) scale(.5102 .3333)">
      <path class="halo" d="M937 1076h.1"/><path class="dot dot-compliance" d="M937 1076h.1"/>
      <path class="halo" d="M958 851h.1M884 980h.1M1150 906h.1M969 1031h.1M932 1065h.1M995 1060h.1"/>
      <path class="dot dot-both" d="M958 851h.1M884 980h.1M1150 906h.1M969 1031h.1M932 1065h.1M995 1060h.1"/>
      <path class="halo" d="M964 864h.1M1016 829h.1M922 968h.1M997 966h.1M1181 725h.1"/>
      <path class="dot dot-compliance" d="M964 864h.1M1016 829h.1M922 968h.1M997 966h.1"/>
      <path class="dot dot-crediting" d="M1181 725h.1"/>
    </g>
  </svg>

  <div class="zoom">
    <button type="button" aria-label="Zoom in"><svg width="20" height="20" aria-hidden="true"><path d="M10 3V17M2 10H18"/></svg></button>
    <button type="button" aria-label="Zoom out"><svg width="20" height="20" aria-hidden="true"><path d="M2 10H18"/></svg></button>
  </div>

  <div class="legend">
    <h3>IMPLEMENTED INSTRUMENTS</h3>
    <ul>
      <li class="key-compliance">Compliance</li>
      <li class="key-crediting">Crediting</li>
      <li class="key-both">Both</li>
    </ul>
  </div>
</section>
</main>
</body>
</html>
```
FILE: styles.css
```css
* { box-sizing: border-box; }
body { margin: 0; background: #fff; color: #414548; font: 16px/22px "Open Sans", "Noto Sans", sans-serif; }
h1, h2, h3, p, ul { margin: 0; padding: 0; }
ul { list-style: none; }
a { text-decoration: none; color: inherit; }
button { font: inherit; color: inherit; background: none; border: 0; padding: 0; cursor: pointer; }

.site-header { display: flex; justify-content: space-between; height: 77px; padding: 0 26px 0 27px; background: #e6e5e1; }
.brand { display: flex; align-items: center; gap: 4px; height: 65px; color: #002f54; font: 700 16px/24px Roboto, sans-serif; }
.brand-globe { width: 42px; height: 42px; }
.main-nav { display: flex; height: 57px; color: #9b958c; font-size: 14px; font-weight: 700; }
.main-nav a { padding: 19px 14px 0 15px; }
.main-nav .is-active { color: #1a1d20; border-bottom: 3px solid #002244; }
.main-nav .is-menu { color: #0071bc; }
.caret { display: inline-block; margin-left: 6px; vertical-align: 2px; border: 4px solid transparent; border-top-color: currentColor; border-bottom: 0; }

.banner { display: grid; height: 264px; color: #fff;
  background: linear-gradient(to bottom right, rgba(80, 188, 122, 0) 58%, rgba(80, 188, 122, .65)), linear-gradient(to right, #0070d6, #007bc2 22%, #008da2 40%, #00978f 65%, #00a67b); }
.banner > * { grid-area: 1 / 1; }
.banner-pattern { display: block; }
.banner-text { position: relative; padding: 67px 34px 0; }
.banner h1 { font-size: 36px; line-height: 50px; font-weight: 700; letter-spacing: 1px; }
.banner p { padding-top: 6px; }

main { padding: 24px 26px 25px 28px; }
.intro { padding: 42px 24px 48px; border: 1px solid #f0f0f0; border-left: 4px solid #337ab7; box-shadow: 0 4px 8px rgba(0, 0, 0, .07); }
.intro h2 { padding-bottom: 20px; font-size: 22px; line-height: 34px; font-weight: 700; letter-spacing: 1px; }
.intro p { font-size: 15px; }

.sections { display: grid; grid-template-columns: 1fr 1fr; gap: 36px; padding-top: 23px; }
.tabs h2 { height: 46px; border-bottom: 1px solid; text-align: center; font-size: 29px; line-height: 36px; font-weight: 400; letter-spacing: 1px; }
.tabs nav { display: flex; gap: 12px; padding: 4px 12px 0 0; }
.tabs a { flex: 1 1 0; height: 66px; padding-top: 13px; text-align: center; font-size: 17px; font-weight: 700; }
.tabs-compliance { color: #6f3390; }
.tabs-compliance a { background: #f7f5f9; }
.tabs-credit { color: #23b08b; }
.tabs-credit a { background: #f1f9f7; }

.stats { display: grid; grid-template-columns: 861fr 632fr 1037fr; height: 240px; padding-top: 25px; font-size: 17px; font-weight: 700; }
.stat { display: flex; align-items: flex-start; }
.circle { display: flex; flex: none; align-items: center; justify-content: center; width: 60px; height: 60px; border: 1px solid #8abfe6; border-radius: 50%; font-size: 22px; font-weight: 700; line-height: 22px; padding-bottom: 4px; color: #66c2cb; }
.circle-large { width: 144px; height: 144px; margin-top: 23px; font-size: 50px; padding-bottom: 0; }
.circle-medium { width: 108px; height: 108px; margin-top: 22px; font-size: 50px; padding-bottom: 0; }
.link { flex: none; width: 24px; height: 2px; background: #86bbe3; }
.stat-label { padding-left: 11px; line-height: 17px; }
.stat-total { padding-left: 164px; }
.stat-total > .circle-large { margin-left: -42px; }
.stat-total > .link { margin-top: 84px; height: 3px; }
.stat-total > .stat-label { margin-top: 66px; }
.stat-national > .link { margin-top: 73px; }
.stat-national > .stat-label { margin-top: 55px; }
.stat-subnational > .link { margin-top: 66px; }
.stat-subnational > .stat-label { margin-top: 46px; }
.breakdown { width: 228px; }
.breakdown li { display: flex; align-items: center; justify-content: flex-end; }
.breakdown li > span { padding-right: 4px; }
.part-ets { padding-right: 6px; }
.part-ets .circle { color: #34589f; }
.part-tax { padding-right: 44px; }
.part-tax .circle { color: #e42d43; }
.breakdown .part-gov { align-items: flex-start; margin-top: -5px; text-align: center; line-height: 24px; }
.part-gov span { width: 126px; }
.part-gov .circle { margin-top: 30px; }
.part-gov .link { height: 3px; margin-top: 45px; }

.map-panel { position: relative; max-width: 1560px; margin: 0 auto; background: #e6e5e1; font-family: "Liberation Sans", Arial, sans-serif; }
.map-panel header { height: 86px; padding: 8px 60px 0 12px; }
.map-panel h2 { font-size: 22px; line-height: 28px; font-weight: 700; }
.map-panel p { padding-top: 2px; color: #666d70; font-size: 17px; line-height: 22px; }
.download { position: absolute; top: 18px; right: 19px; display: flex; align-items: center; gap: 8px; font-size: 21px; line-height: 24px; }
.world { display: block; width: 100%; height: auto; }
.world path { vector-effect: non-scaling-stroke; stroke: #d2cfca; stroke-width: 1px; stroke-linejoin: round; fill: none; }
.world .land { fill: #e0dfdb; stroke-width: 2px; }
.world .sea { fill: #e6e5e1; }
.world .border { stroke-width: 1px; }
.world .fringe { stroke-width: 3px; }
.world .fringe-fill { fill: #d5d3ce; }
.world .specks { stroke-width: 2px; stroke-linecap: round; stroke: #d8d6d1; }
.world .compliance { fill: #905594; }
.world .both { fill: #41a0b6; }
.world .crediting { fill: #46c57c; }
.world .halo { stroke: #e8e8ea; stroke-width: 11px; stroke-linecap: round; }
.world .dot { stroke-width: 8px; stroke-linecap: round; }
.world .dot-both { stroke: #41a0b6; }
.world .dot-compliance { stroke: #905594; }
.world .dot-crediting { stroke: #46c57c; }

.zoom { position: absolute; top: 92px; right: 11px; display: flex; flex-direction: column; border: 1px solid #d4d2ce; border-radius: 3px; background: #e6e5e1; }
.zoom button { display: grid; place-items: center; width: 33px; height: 33px; }
.zoom button + button { border-top: 1px solid #d4d2ce; }
.zoom svg { fill: none; stroke: #0078d0; stroke-width: 3px; stroke-linecap: round; }

.legend { position: absolute; left: 12px; bottom: 18px; width: 264px; padding: 7px 9px 4px; border: 1px solid #d0cec9; background: #e4e3df; }
.legend h3 { padding-bottom: 5px; color: #111; font-size: 17px; line-height: 20px; font-weight: 700; white-space: nowrap; }
.legend li { display: flex; align-items: center; gap: 7px; font-size: 17px; line-height: 25px; }
.legend li::before { content: ""; width: 18px; height: 18px; background: #905594; border: 1px solid #d0cec9; }
.legend .key-crediting::before { background: #46c57c; }
.legend .key-both::before { background: #41a0b6; }
```
